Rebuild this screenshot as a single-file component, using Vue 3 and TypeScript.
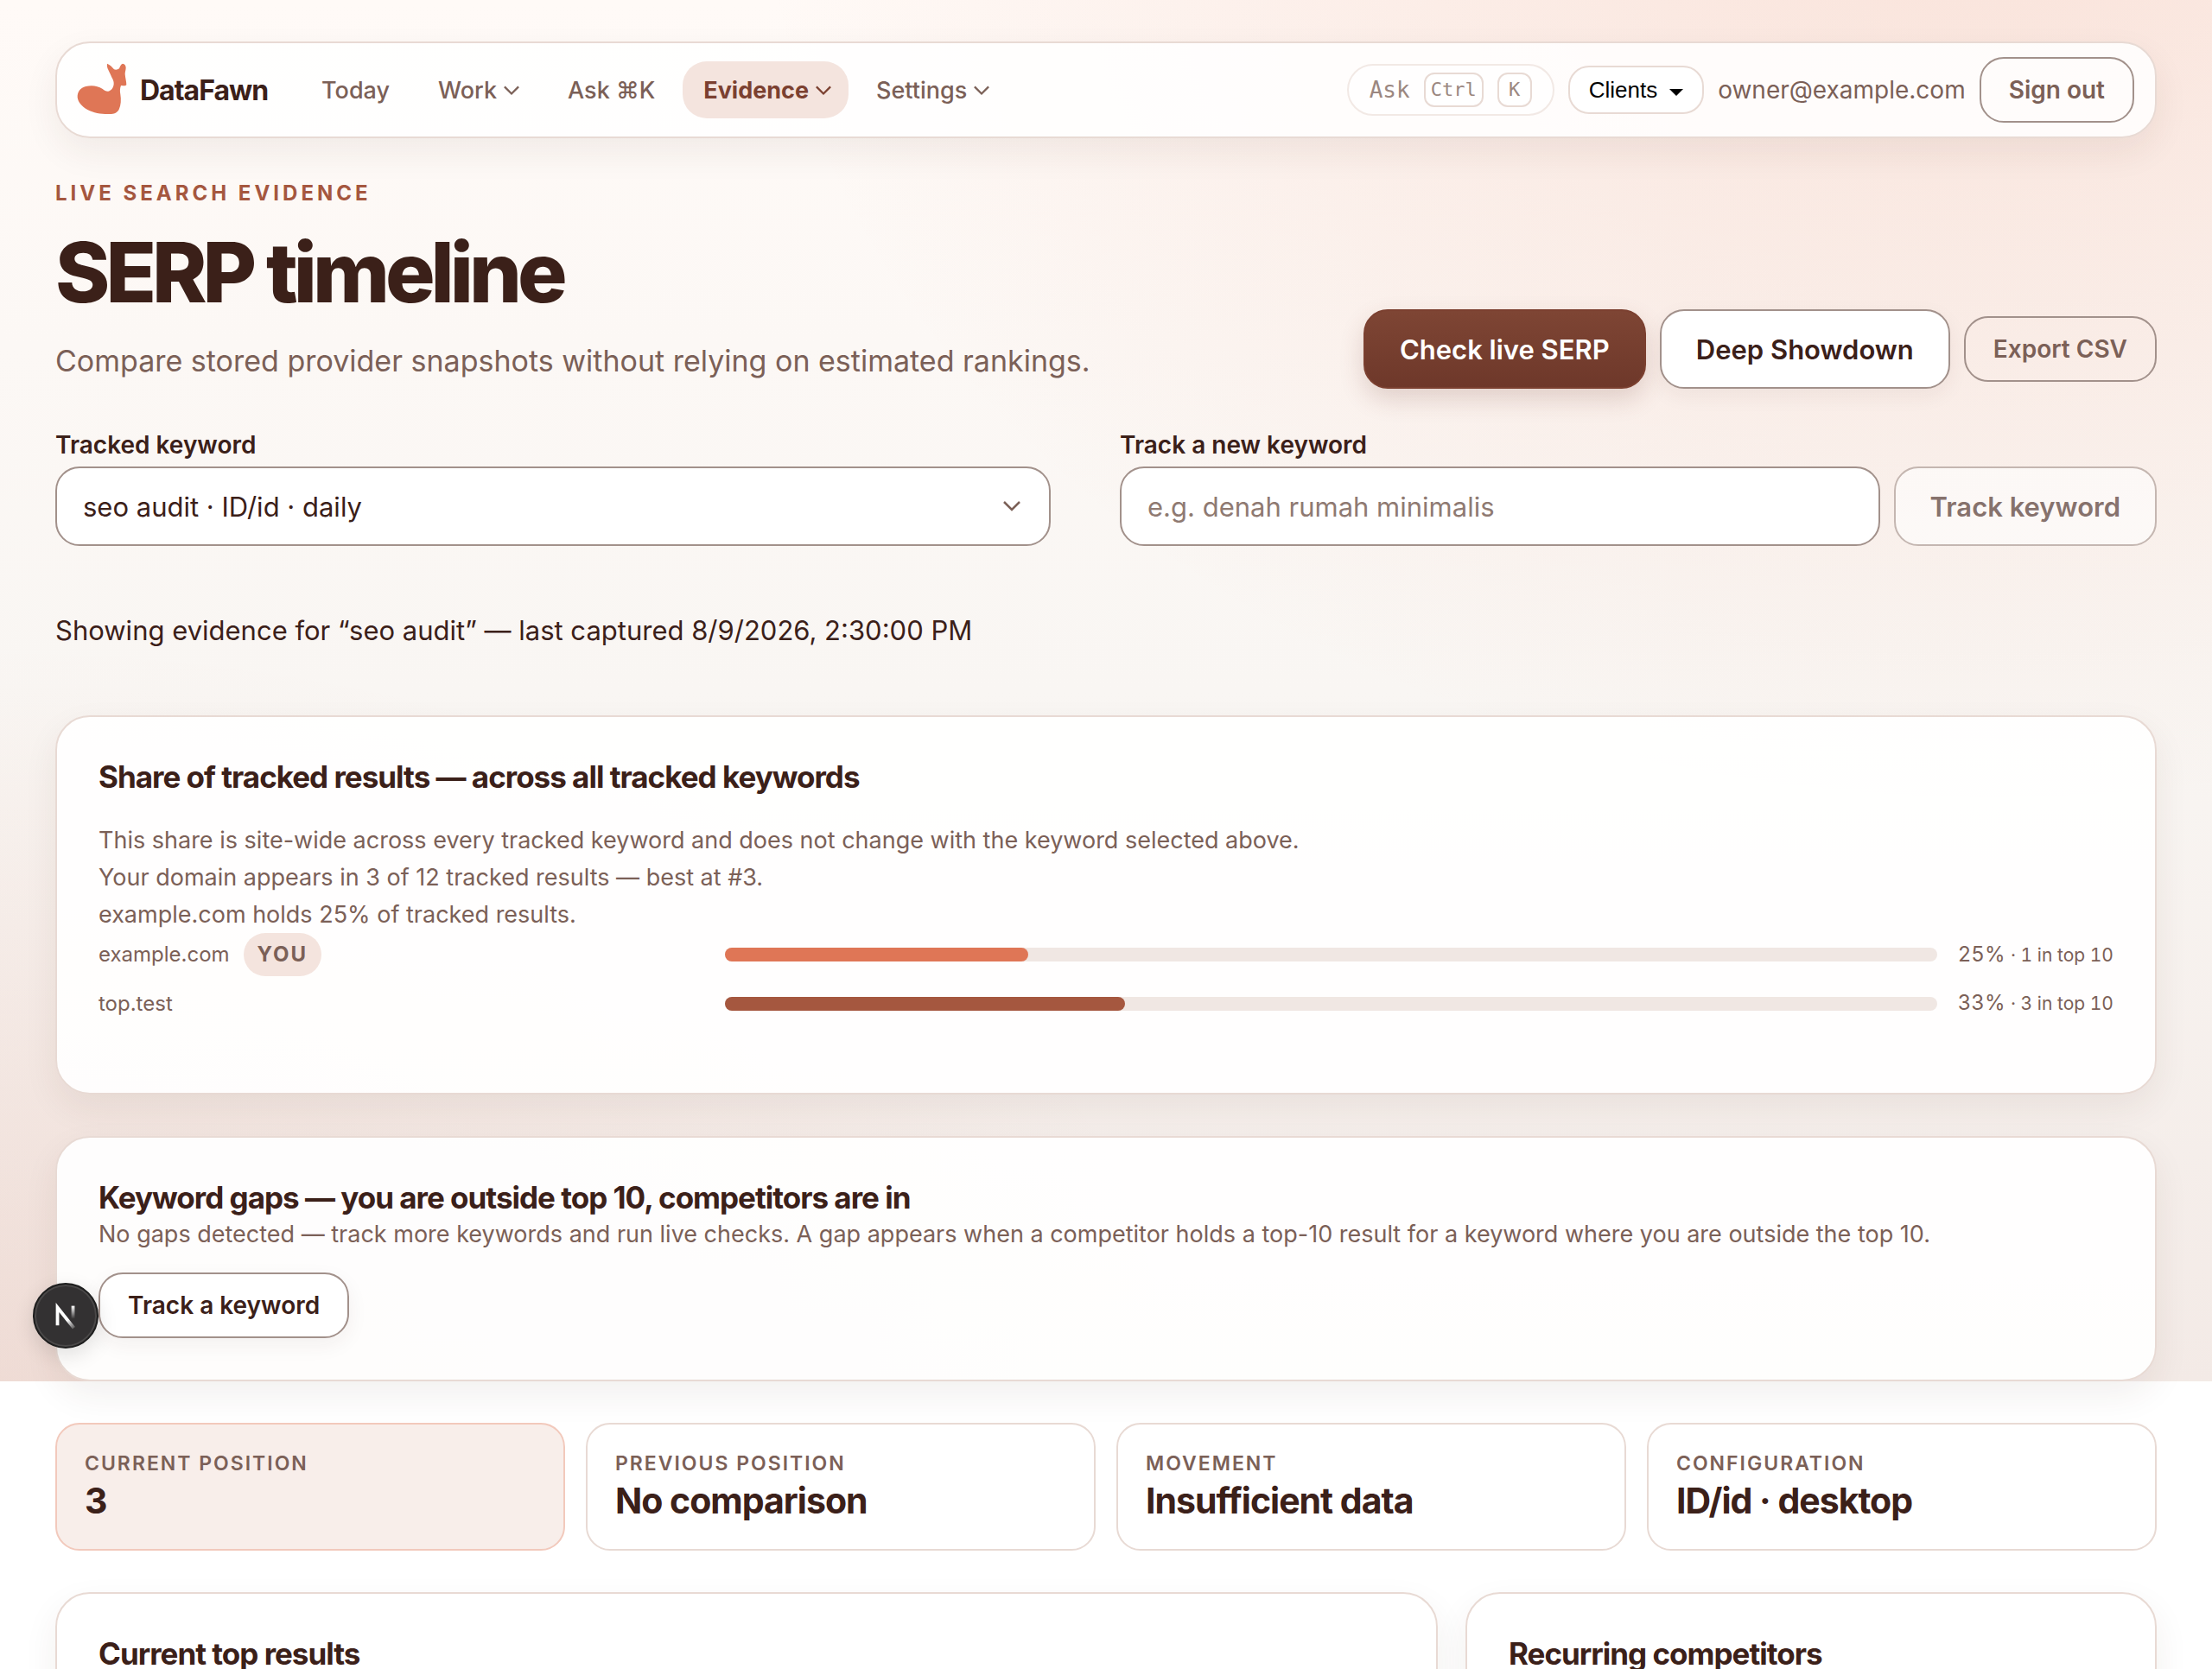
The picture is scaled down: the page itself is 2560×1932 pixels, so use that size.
<script setup lang="ts">
import { ref } from 'vue'

interface NavItem {
  label: string
  menu: boolean
  active?: boolean
}

interface ShareRow {
  domain: string
  you: boolean
  share: number
  topTen: number
}

interface Stat {
  label: string
  value: string
  highlight?: boolean
}

const navItems: NavItem[] = [
  { label: 'Today', menu: false },
  { label: 'Work', menu: true },
  { label: 'Ask ⌘K', menu: false },
  { label: 'Evidence', menu: true, active: true },
  { label: 'Settings', menu: true },
]

const shareRows: ShareRow[] = [
  { domain: 'example.com', you: true, share: 25, topTen: 1 },
  { domain: 'top.test', you: false, share: 33, topTen: 3 },
]

const stats: Stat[] = [
  { label: 'Current position', value: '3', highlight: true },
  { label: 'Previous position', value: 'No comparison' },
  { label: 'Movement', value: 'Insufficient data' },
  { label: 'Configuration', value: 'ID/id · desktop' },
]

const keyword = ref('seo-audit')
const newKeyword = ref('')
</script>

<template>
  <div class="page">
    <div class="canvas">
      <header class="topbar">
        <a class="brand" href="#">
          <svg class="brand-mark" viewBox="12 0 180 216" aria-hidden="true">
            <path
              d="M120 17C130 21 138 29 144 37C150 39 157 38 162 34C164 27 168 19 174 17C181 18 185 24 185 31C185 39 182 46 182 53C183 66 187 79 187 91C182 96 175 92 168 93C164 103 164 112 166 124C169 142 168 162 161 176C154 188 143 192 130 192C104 193 74 189 52 177C34 167 19 151 17 134C16 115 27 101 46 96C66 91 88 94 103 104C111 110 117 114 124 113C135 111 142 101 143 88C144 76 137 68 133 58C129 45 117 32 120 17Z"
            />
          </svg>
          <span>DataFawn</span>
        </a>
        <nav class="nav" aria-label="Main">
          <a
            v-for="item in navItems"
            :key="item.label"
            href="#"
            class="nav-item"
            :class="{ active: item.active }"
          >
            {{ item.label }}
            <svg v-if="item.menu" class="nav-chevron" viewBox="0 0 20 20" aria-hidden="true">
              <path d="M1 6l9 9 9-9" />
            </svg>
          </a>
        </nav>
        <div class="account">
          <button type="button" class="ask">Ask <kbd>Ctrl</kbd> <kbd>K</kbd></button>
          <button type="button" class="clients">
            Clients
            <svg viewBox="0 0 16 8" aria-hidden="true"><path d="M0 0h16L8 8z" /></svg>
          </button>
          <span class="email">owner@example.com</span>
          <button type="button" class="btn btn-small btn-ghost">Sign out</button>
        </div>
      </header>

      <section class="hero">
        <div class="hero-copy">
          <p class="eyebrow">Live search evidence</p>
          <h1>SERP timeline</h1>
          <p class="lead">Compare stored provider snapshots without relying on estimated rankings.</p>
        </div>
        <div class="hero-actions">
          <button type="button" class="btn btn-primary">Check live SERP</button>
          <button type="button" class="btn btn-plain">Deep Showdown</button>
          <button type="button" class="btn btn-small btn-ghost">Export CSV</button>
        </div>
      </section>

      <form class="controls" @submit.prevent>
        <div class="field">
          <label for="tracked">Tracked keyword</label>
          <div class="select-wrap">
            <select id="tracked" v-model="keyword" class="input">
              <option value="seo-audit">seo audit · ID/id · daily</option>
            </select>
            <svg class="select-chevron" viewBox="0 0 20 20" aria-hidden="true">
              <path d="M1 5l9 9 9-9" />
            </svg>
          </div>
        </div>
        <div class="field">
          <label for="new-keyword">Track a new keyword</label>
          <div class="add-row">
            <input
              id="new-keyword"
              v-model="newKeyword"
              class="input"
              type="text"
              placeholder="e.g. denah rumah minimalis"
            />
            <button type="submit" class="btn btn-plain" disabled>Track keyword</button>
          </div>
        </div>
      </form>

      <p class="status">Showing evidence for “seo audit” — last captured 8/9/2026, 2:30:00 PM</p>

      <div class="cards">
        <section class="card share">
          <h2>Share of tracked results — across all tracked keywords</h2>
          <div class="share-copy">
            <p>This share is site-wide across every tracked keyword and does not change with the keyword selected above.</p>
            <p>Your domain appears in 3 of 12 tracked results — best at #3.</p>
            <p>example.com holds 25% of tracked results.</p>
          </div>
          <div class="bars">
            <div v-for="row in shareRows" :key="row.domain" class="bar-row">
              <span class="domain">{{ row.domain }} <b v-if="row.you" class="you">You</b></span>
              <span class="track">
                <span class="fill" :class="{ own: row.you }" :style="{ width: row.share + '%' }"></span>
              </span>
              <span class="figure">{{ row.share }}% <small>· {{ row.topTen }} in top 10</small></span>
            </div>
          </div>
        </section>

        <section class="card gaps">
          <h2>Keyword gaps — you are outside top 10, competitors are in</h2>
          <p>No gaps detected — track more keywords and run live checks. A gap appears when a competitor holds a top-10 result for a keyword where you are outside the top 10.</p>
          <button type="button" class="btn btn-small btn-plain">Track a keyword</button>
        </section>
      </div>

      <button type="button" class="dev-badge" aria-label="Open developer tools">
        <svg viewBox="0 0 76 76" aria-hidden="true">
          <defs>
            <linearGradient id="badge-diagonal" x1="42" y1="42" x2="50" y2="54" gradientUnits="userSpaceOnUse">
              <stop stop-color="#fff" />
              <stop offset="1" stop-color="#fff" stop-opacity="0.1" />
            </linearGradient>
            <linearGradient id="badge-stem" x1="47" y1="26" x2="47" y2="42" gradientUnits="userSpaceOnUse">
              <stop stop-color="#fff" />
              <stop offset="1" stop-color="#fff" stop-opacity="0" />
            </linearGradient>
          </defs>
          <path d="M28 50V28L48 53" stroke="url(#badge-diagonal)" />
          <path d="M47 26v16" stroke="url(#badge-stem)" />
        </svg>
      </button>
    </div>

    <main class="below">
      <div class="stats">
        <div v-for="stat in stats" :key="stat.label" class="stat" :class="{ highlight: stat.highlight }">
          <span class="stat-label">{{ stat.label }}</span>
          <strong class="stat-value">{{ stat.value }}</strong>
        </div>
      </div>
      <div class="panels">
        <section class="card"><h2>Current top results</h2></section>
        <section class="card"><h2>Recurring competitors</h2></section>
      </div>
    </main>
  </div>
</template>

<style>
html,
body {
  margin: 0;
  background: #fff;
}
</style>

<style scoped>
.page {
  --ink: #3b2019;
  --muted: #7b6057;
  --line: #e8dad4;
  --line-strong: #a2918b;
  --rust: #a5573f;
  --coral: #df7656;
  --tint: #f4e4de;
  height: 100vh;
  overflow: hidden;
  color: var(--ink);
  font-family: Inter, 'Liberation Sans', sans-serif;
  font-size: 28px;
}

.page *,
.page *::before {
  box-sizing: border-box;
}

h1,
h2,
p {
  margin: 0;
}

button,
input,
select {
  font-family: inherit;
}

.canvas {
  position: relative;
  padding: 48px 64px 0;
  background:
    radial-gradient(ellipse at 90% -10%, rgba(224, 120, 86, 0.19), transparent 44%),
    radial-gradient(ellipse at 0% 100%, rgba(200, 90, 60, 0.1), transparent 38%),
    linear-gradient(180deg, #fffaf7 0%, #f9f6f3 50%, #f3eae6 100%);
}

.topbar {
  display: flex;
  align-items: center;
  height: 112px;
  padding: 0 24px 0 22px;
  border: 2px solid var(--line);
  border-radius: 40px;
  background: rgba(255, 255, 255, 0.86);
  box-shadow: 0 16px 40px rgba(74, 40, 28, 0.07);
}

.brand {
  display: flex;
  align-items: center;
  gap: 14px;
  color: var(--ink);
  font-size: 32px;
  font-weight: 700;
  letter-spacing: -1px;
  text-decoration: none;
}

.brand-mark {
  width: 60px;
  height: 72px;
  fill: var(--coral);
}

.nav {
  display: flex;
  gap: 8px;
  margin-left: 38px;
}

.nav-item {
  display: flex;
  align-items: center;
  gap: 8px;
  height: 66px;
  padding: 0 24px;
  border-radius: 28px;
  color: var(--muted);
  font-size: 27px;
  font-weight: 500;
  text-decoration: none;
  white-space: nowrap;
}

.nav-item.active {
  padding-right: 20px;
  background: var(--tint);
  color: #7b4030;
  font-weight: 700;
}

.nav-chevron {
  width: 18px;
  height: 18px;
}

.nav-chevron path,
.select-chevron path {
  fill: none;
  stroke: currentColor;
  stroke-width: 2.5;
}

.account {
  display: flex;
  align-items: center;
  gap: 16px;
  margin-left: auto;
}

.ask {
  display: flex;
  align-items: center;
  gap: 16px;
  height: 60px;
  padding: 0 24px;
  border: 2px solid #f2e9e5;
  border-radius: 30px;
  background: rgba(255, 255, 255, 0.6);
  color: #9b8780;
  font-family: 'DejaVu Sans Mono', monospace;
  font-size: 26px;
}

.ask kbd {
  min-width: 40px;
  padding: 0 6px;
  border: 2px solid var(--line);
  border-radius: 12px;
  background: #fff;
  font-family: inherit;
  font-size: 22px;
  line-height: 36px;
}

.clients {
  display: flex;
  align-items: center;
  gap: 14px;
  height: 56px;
  padding: 0 22px;
  border: 2px solid var(--line);
  border-radius: 24px;
  background: #fff;
  color: #000;
  font-family: 'Liberation Sans', sans-serif;
  font-size: 26px;
}

.clients svg {
  width: 16px;
  height: 8px;
  margin-top: 6px;
}

.email {
  color: var(--muted);
}

.btn {
  height: 92px;
  padding: 0 40px;
  border: 2px solid var(--line-strong);
  border-radius: 28px;
  color: var(--ink);
  font-size: 31px;
  font-weight: 600;
  white-space: nowrap;
}

.btn-small {
  height: 76px;
  padding: 0 32px;
  font-size: 28px;
}

.btn-plain {
  background: #fff;
  box-shadow: 0 8px 24px rgba(74, 40, 28, 0.06);
}

.btn-ghost {
  background: transparent;
  color: var(--muted);
}

.btn-primary {
  border-color: #7b4030;
  background: linear-gradient(180deg, #7e4534, #6e382a);
  box-shadow: 0 12px 28px rgba(110, 56, 42, 0.18);
  color: #fff;
}

.btn:disabled {
  opacity: 0.6;
  box-shadow: none;
}

.hero {
  display: flex;
  align-items: flex-end;
  justify-content: space-between;
  margin-top: 46px;
}

.hero-copy {
  padding-bottom: 4px;
}

.eyebrow {
  color: var(--rust);
  font-size: 24px;
  font-weight: 700;
  letter-spacing: 4px;
  line-height: 36px;
  text-transform: uppercase;
}

h1 {
  margin-top: 25px;
  font-size: 96px;
  font-weight: 800;
  letter-spacing: -5px;
  line-height: 96px;
}

.lead {
  margin-top: 27px;
  color: var(--muted);
  font-size: 34px;
  line-height: 56px;
}

.hero-actions {
  display: flex;
  align-items: center;
  gap: 16px;
}

.controls {
  display: grid;
  grid-template-columns: 24fr 25fr;
  gap: 80px;
  margin-top: 44px;
}

.field {
  display: flex;
  flex-direction: column;
  gap: 4px;
}

.field label {
  font-weight: 600;
  line-height: 42px;
}

.select-wrap {
  position: relative;
}

.input {
  width: 100%;
  min-width: 0;
  height: 92px;
  padding: 0 30px;
  border: 2px solid var(--line-strong);
  border-radius: 28px;
  background: #fff;
  color: var(--ink);
  font-size: 31px;
  appearance: none;
}

.input::placeholder {
  color: #8f7a72;
}

.select-chevron {
  position: absolute;
  top: 36px;
  right: 35px;
  width: 20px;
  height: 20px;
  color: var(--muted);
  pointer-events: none;
}

.add-row {
  display: flex;
  gap: 16px;
}

.status {
  margin: 74px 0;
  font-size: 31px;
  line-height: 48px;
}

.cards {
  display: flex;
  flex-direction: column;
  gap: 48px;
}

.card {
  padding: 48px;
  border: 2px solid var(--line);
  border-radius: 40px;
  background: rgba(255, 255, 255, 0.92);
  box-shadow: 0 16px 40px rgba(74, 40, 28, 0.07);
}

.card h2 {
  font-size: 35px;
  font-weight: 700;
  letter-spacing: -1px;
  line-height: 42px;
}

.share {
  padding-bottom: 84px;
}

.share-copy {
  margin-top: 31px;
  color: var(--muted);
  font-size: 27px;
  line-height: 43px;
}

.bars {
  display: flex;
  flex-direction: column;
  gap: 12px;
  color: var(--muted);
  font-size: 24px;
}

.bar-row {
  display: grid;
  grid-template-columns: 1fr 2fr auto;
  align-items: center;
  gap: 24px;
  line-height: 38px;
}

.domain {
  display: flex;
  align-items: center;
  gap: 16px;
}

.you {
  padding: 0 16px;
  border-radius: 25px;
  background: var(--tint);
  font-size: 24px;
  font-weight: 700;
  letter-spacing: 2px;
  line-height: 50px;
  text-transform: uppercase;
}

.track {
  height: 16px;
  border-radius: 8px;
  background: #f0e7e3;
}

.fill {
  display: block;
  height: 16px;
  border-radius: 8px;
  background: var(--rust);
}

.fill.own {
  background: var(--coral);
}

.figure {
  font-variant-numeric: tabular-nums;
}

.figure small {
  font-size: 21px;
}

.gaps p {
  color: var(--muted);
  font-size: 27px;
  line-height: 43px;
}

.gaps .btn {
  margin-top: 23px;
}

.dev-badge {
  position: absolute;
  bottom: 38px;
  left: 38px;
  width: 76px;
  height: 76px;
  padding: 0;
  border: 2px solid #1e1e1e;
  border-radius: 50%;
  background: #333132;
  box-shadow:
    inset 0 0 0 2px #4a4848,
    0 8px 24px rgba(0, 0, 0, 0.12);
}

.dev-badge svg {
  display: block;
  width: 72px;
  height: 72px;
}

.dev-badge path {
  fill: none;
  stroke-width: 4;
}

.below {
  padding: 48px 64px;
}

.stats {
  display: grid;
  grid-template-columns: repeat(4, 1fr);
  gap: 24px;
}

.stat {
  display: flex;
  flex-direction: column;
  padding: 27px 32px 31px;
  border: 2px solid var(--line);
  border-radius: 28px;
  background: #fff;
}

.stat.highlight {
  border-color: #f2c9bc;
  background: #f8eeea;
}

.stat-label {
  color: var(--muted);
  font-size: 23px;
  font-weight: 600;
  letter-spacing: 2px;
  line-height: 36px;
  text-transform: uppercase;
}

.stat-value {
  font-size: 41px;
  font-weight: 700;
  letter-spacing: -1px;
  line-height: 50px;
}

.panels {
  display: grid;
  grid-template-columns: 2fr 1fr;
  gap: 32px;
  margin-top: 48px;
}
</style>
